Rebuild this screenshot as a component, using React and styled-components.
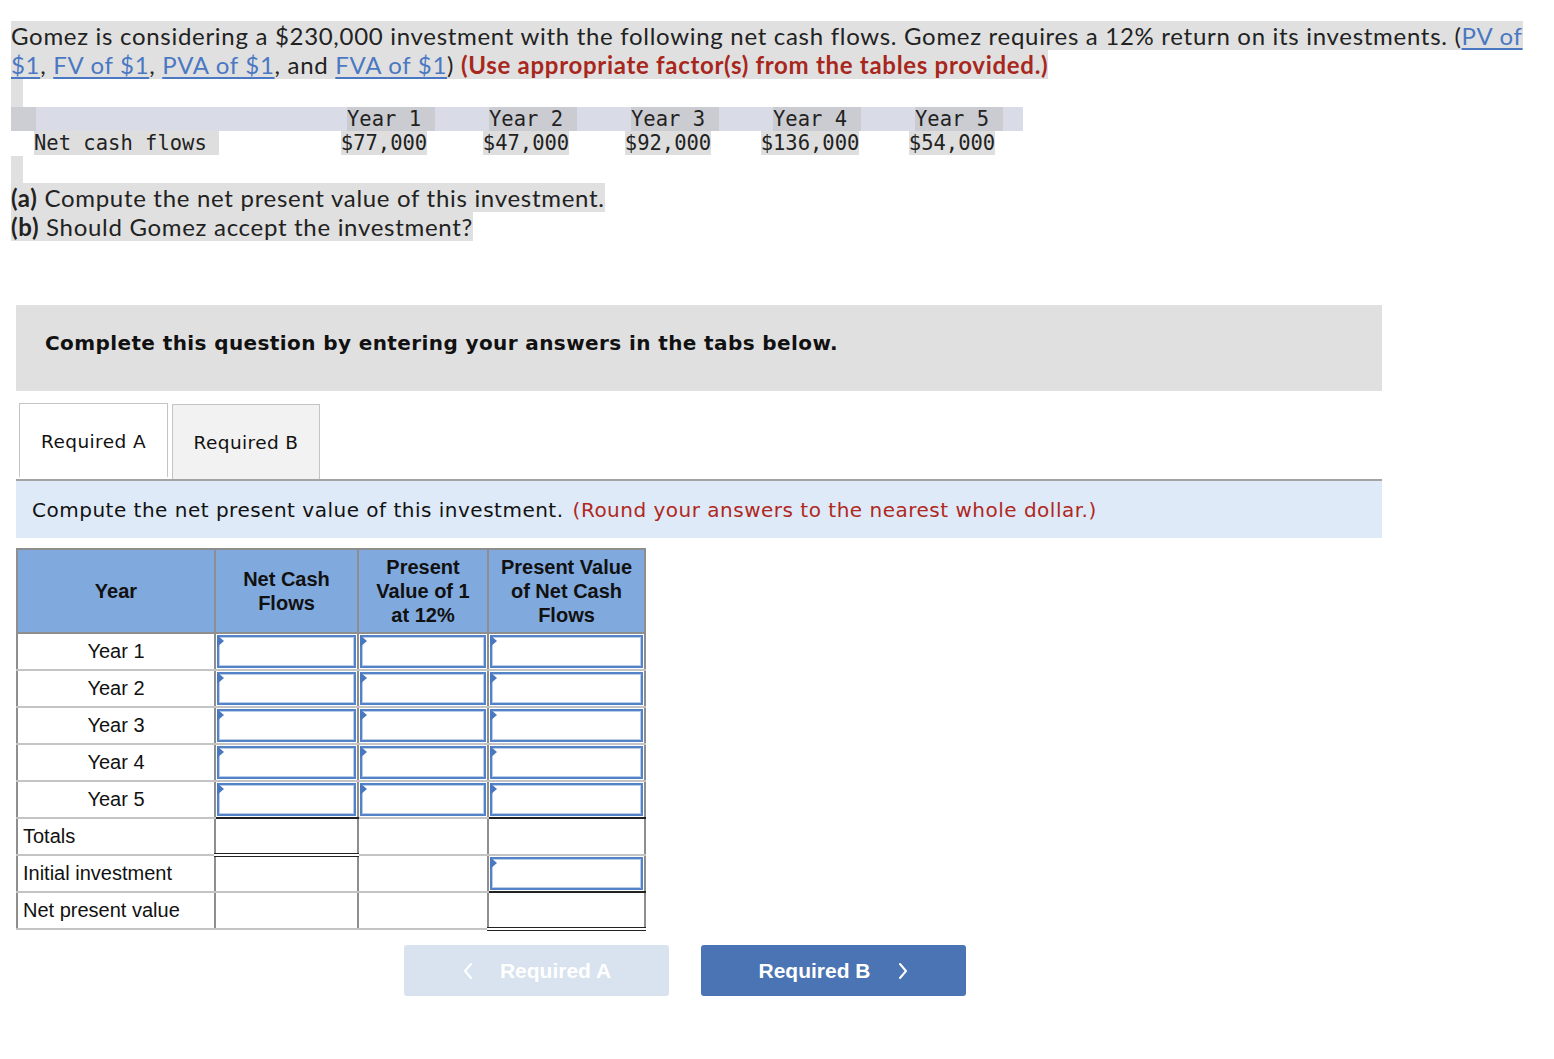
import React from "react";
import styled, { createGlobalStyle } from "styled-components";

const GlobalStyle = createGlobalStyle`
  body {
    margin: 0;
    background: #fff;
  }
`;

const Page = styled.div`
  padding: 22px 0 40px 11px;
  color: #222;
`;

const Prompt = styled.p`
  margin: 0;
  font-family: Lato, "Open Sans", sans-serif;
  font-size: 24px;
  letter-spacing: 0.7px;
  line-height: 28.5px;
  white-space: nowrap;
`;

const Mark = styled.span`
  background: #e0e0e0;
`;

const Link = styled.a`
  color: #4a78c2;
  text-decoration: underline;
  text-underline-offset: 3px;
`;

const Warn = styled.b`
  color: #a8271d;
`;

const Gap = styled.div`
  width: 12px;
  height: 28px;
  background: #e0e0e0;
`;

const Flows = styled.div`
  display: grid;
  grid-template-columns: 302px repeat(5, 142px);
  font-family: "DejaVu Sans Mono", "Liberation Mono", monospace;
  font-size: 20.5px;
  color: #222;
`;

const FlowHead = styled.div`
  height: 24px;
  line-height: 24px;
  background: #d9dce6;
  text-align: center;
`;

const Corner = styled.div`
  width: 25px;
  height: 24px;
  background: #cdced3;
`;

const FlowCell = styled.div`
  height: 25px;
  line-height: 25px;
  text-align: ${(p) => (p.$left ? "left" : "center")};
  padding-left: ${(p) => (p.$left ? "23px" : "0")};
`;

const Chip = styled.span`
  background: ${(p) => (p.$dark ? "#cbccd1" : "#dedede")};
  padding-right: ${(p) => p.$pad || 0}px;
  margin-right: -${(p) => p.$pad || 0}px;
`;

const Notice = styled.div`
  margin: 64px 0 0 5px;
  width: 1366px;
  height: 86px;
  box-sizing: border-box;
  padding: 26px 0 0 29px;
  background: #e0e0e0;
  font-family: "DejaVu Sans", Verdana, sans-serif;
  font-weight: bold;
  font-size: 20px;
  letter-spacing: 0.4px;
  line-height: 24px;
  color: #111;
`;

const TabBar = styled.div`
  margin: 12px 0 0 5px;
  width: 1366px;
  display: flex;
  gap: 4px;
  padding-left: 3px;
  box-sizing: border-box;
  border-bottom: 2px solid #a3a3a3;
`;

const Tab = styled.div`
  width: ${(p) => (p.$active ? 149 : 148)}px;
  height: 75px;
  box-sizing: border-box;
  border: 1px solid #c4c4c4;
  border-bottom: ${(p) => (p.$active ? "2px solid #fff" : "none")};
  margin-bottom: ${(p) => (p.$active ? "-2px" : "0")};
  margin-top: ${(p) => (p.$active ? "0" : "1px")};
  padding-top: ${(p) => (p.$active ? "3px" : "1px")};
  background: ${(p) => (p.$active ? "#fff" : "#f2f2f2")};
  display: flex;
  align-items: center;
  justify-content: center;
  font-family: "DejaVu Sans", Verdana, sans-serif;
  font-size: 18.5px;
  letter-spacing: 0.4px;
  color: #111;
`;

const Band = styled.div`
  margin-left: 5px;
  width: 1350px;
  height: 57px;
  padding-left: 16px;
  display: flex;
  align-items: center;
  background: #deeaf7;
  font-family: "DejaVu Sans", Verdana, sans-serif;
  font-size: 20px;
  letter-spacing: 0.5px;
  color: #111;
`;

const Hint = styled.span`
  color: #b0271e;
  margin-left: 9px;
`;

const Table = styled.table`
  margin: 10px 0 0 5px;
  border-collapse: collapse;
  border: 2px solid #8e8e8e;
  font-family: "Liberation Sans", Arial, sans-serif;
  font-size: 20px;
  color: #111;
`;

const Th = styled.th`
  width: ${(p) => p.$w}px;
  height: 84px;
  padding: 0 4px;
  box-sizing: border-box;
  background: #80a9de;
  border: 2px solid #8e8e8e;
  font-weight: bold;
  line-height: 24px;
  text-align: center;
`;

const Td = styled.td`
  height: 37px;
  padding: 0;
  box-sizing: border-box;
  border-left: 2px solid #8e8e8e;
  border-right: 2px solid #8e8e8e;
  border-top: 2px solid #c4c4c4;
  border-bottom: ${(p) =>
    p.$double ? "4px double #222" : p.$ruleBottom ? "2px solid #222" : "2px solid #c4c4c4"};
  text-align: ${(p) => (p.$left ? "left" : "center")};
  padding-left: ${(p) => (p.$left ? "5px" : "0")};
  vertical-align: middle;
`;

const Field = styled.div`
  position: relative;
  height: 29px;
  margin: 1px;
  border: 2px solid #5482c6;
  box-shadow: inset 0 0 0 1px #b9cdea;
  background: #fff;

  &::before {
    content: "";
    position: absolute;
    left: -2px;
    top: -2px;
    border-top: 6px solid transparent;
    border-bottom: 6px solid transparent;
    border-left: 7px solid #4a78c0;
  }
`;

const Actions = styled.div`
  margin: 14px 0 0 5px;
  width: 1338px;
  display: flex;
  justify-content: center;
  gap: 32px;
`;

const NavButton = styled.button`
  width: 265px;
  height: 51px;
  border: none;
  border-radius: 3px;
  background: ${(p) => (p.disabled ? "#d9e2ef" : "#4a74b3")};
  color: #fff;
  font-family: "Liberation Sans", Arial, sans-serif;
  font-weight: bold;
  font-size: 21px;
  display: flex;
  align-items: center;
  justify-content: center;
  gap: 26px;
  cursor: ${(p) => (p.disabled ? "default" : "pointer")};
`;

const Chevron = ({ dir }) => (
  <svg width="12" height="20" viewBox="0 0 12 20" fill="none">
    <polyline
      points={dir === "left" ? "9,3 3,10 9,17" : "3,3 9,10 3,17"}
      stroke="#fff"
      strokeWidth="2"
      strokeLinecap="round"
      strokeLinejoin="round"
    />
  </svg>
);

const flows = [
  ["Year 1", "$77,000"],
  ["Year 2", "$47,000"],
  ["Year 3", "$92,000"],
  ["Year 4", "$136,000"],
  ["Year 5", "$54,000"],
];

export default function App() {
  return (
    <>
      <GlobalStyle />
      <Page>
        <Prompt>
          <Mark>
            Gomez is considering a $230,000 investment with the following net cash flows. Gomez
            requires a 12% return on its investments. (
            <Link href="#pv">
              PV of
              <br />
              $1
            </Link>
            , <Link href="#fv">FV of $1</Link>, <Link href="#pva">PVA of $1</Link>, and{" "}
            <Link href="#fva">FVA of $1</Link>) <Warn>(Use appropriate factor(s) from the tables provided.)</Warn>
          </Mark>
        </Prompt>
        <Gap />
        <Flows>
          <FlowHead>
            <Corner />
          </FlowHead>
          {flows.map(([year]) => (
            <FlowHead key={year}>
              <Chip $dark $pad={14}>
                {year}
              </Chip>
            </FlowHead>
          ))}
          <FlowCell $left>
            <Chip $pad={12}>Net cash flows</Chip>
          </FlowCell>
          {flows.map(([year, value]) => (
            <FlowCell key={year}>
              <Chip>{value}</Chip>
            </FlowCell>
          ))}
        </Flows>
        <Gap />
        <Prompt>
          <Mark>
            <b>(a)</b> Compute the net present value of this investment.
          </Mark>
          <br />
          <Mark>
            <b>(b)</b> Should Gomez accept the investment?
          </Mark>
        </Prompt>

        <Notice>Complete this question by entering your answers in the tabs below.</Notice>

        <TabBar>
          <Tab $active>Required A</Tab>
          <Tab>Required B</Tab>
        </TabBar>
        <Band>
          Compute the net present value of this investment.
          <Hint>(Round your answers to the nearest whole dollar.)</Hint>
        </Band>

        <Table>
          <thead>
            <tr>
              <Th $w={198}>Year</Th>
              <Th $w={143}>
                Net Cash
                <br />
                Flows
              </Th>
              <Th $w={130}>
                Present
                <br />
                Value of 1
                <br />
                at 12%
              </Th>
              <Th $w={157}>
                Present Value
                <br />
                of Net Cash
                <br />
                Flows
              </Th>
            </tr>
          </thead>
          <tbody>
            {flows.map(([year], i) => (
              <tr key={year}>
                <Td>{year}</Td>
                <Td $ruleBottom={i === 4}>
                  <Field />
                </Td>
                <Td>
                  <Field />
                </Td>
                <Td $ruleBottom={i === 4}>
                  <Field />
                </Td>
              </tr>
            ))}
            <tr>
              <Td $left>Totals</Td>
              <Td $double />
              <Td />
              <Td />
            </tr>
            <tr>
              <Td $left>Initial investment</Td>
              <Td />
              <Td />
              <Td $ruleBottom>
                <Field />
              </Td>
            </tr>
            <tr>
              <Td $left>Net present value</Td>
              <Td />
              <Td />
              <Td $double />
            </tr>
          </tbody>
        </Table>

        <Actions>
          <NavButton disabled>
            <Chevron dir="left" />
            Required A
          </NavButton>
          <NavButton>
            Required B
            <Chevron dir="right" />
          </NavButton>
        </Actions>
      </Page>
    </>
  );
}
